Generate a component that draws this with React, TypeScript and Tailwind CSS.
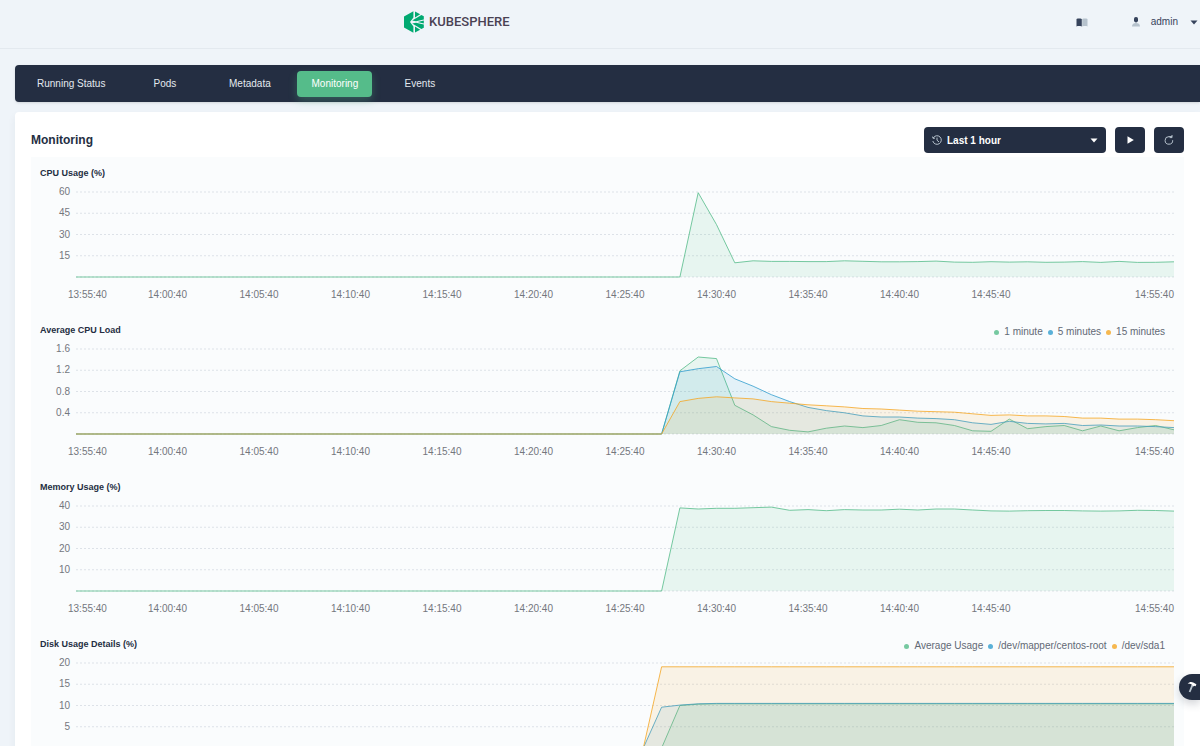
import { Fragment } from "react";

const GREEN = "#55bc8a";
const BLUE = "#329dce";
const ORANGE = "#f5a623";

interface Series {
  name: string;
  color: string;
  // index of the first sample that is not zero
  start: number;
  values: number[];
}

interface ChartProps {
  title: string;
  ticks: number[];
  series: Series[];
  legend?: boolean;
}

const SAMPLES = 61;
const WIDTH = 1098;
const HEIGHT = 85;

const times = [
  "13:55:40",
  "14:00:40",
  "14:05:40",
  "14:10:40",
  "14:15:40",
  "14:20:40",
  "14:25:40",
  "14:30:40",
  "14:35:40",
  "14:40:40",
  "14:45:40",
  "14:55:40",
];

const tabs = ["Running Status", "Pods", "Metadata", "Monitoring", "Events"];

const charts: ChartProps[] = [
  {
    title: "CPU Usage (%)",
    ticks: [60, 45, 30, 15],
    series: [
      {
        name: "CPU",
        color: GREEN,
        start: 34,
        values: [
          59.5, 37, 10, 11.4, 11, 11, 10.9, 10.9, 11.4, 11.1, 10.7, 10.7, 10.9,
          11.2, 10.5, 10.4, 10.8, 10.5, 10.7, 10.4, 10.5, 10.9, 10.3, 11, 10.3,
          10.4, 10.7,
        ],
      },
    ],
  },
  {
    title: "Average CPU Load",
    ticks: [1.6, 1.2, 0.8, 0.4],
    legend: true,
    series: [
      {
        name: "1 minute",
        color: GREEN,
        start: 33,
        values: [
          1.19, 1.45, 1.42, 0.54, 0.36, 0.14, 0.07, 0.04, 0.11, 0.15, 0.12,
          0.16, 0.27, 0.22, 0.21, 0.16, 0.06, 0.05, 0.28, 0.1, 0.14, 0.16,
          0.06, 0.15, 0.06, 0.12, 0.16, 0.08,
        ],
      },
      {
        name: "5 minutes",
        color: BLUE,
        start: 33,
        values: [
          1.17, 1.23, 1.27, 1.04, 0.9, 0.74, 0.61, 0.5, 0.44, 0.4, 0.34, 0.32,
          0.32, 0.3, 0.29, 0.27, 0.21, 0.18, 0.24, 0.2, 0.19, 0.2, 0.16, 0.17,
          0.15, 0.15, 0.14, 0.12,
        ],
      },
      {
        name: "15 minutes",
        color: ORANGE,
        start: 33,
        values: [
          0.61, 0.67, 0.7, 0.68, 0.66, 0.61, 0.58, 0.55, 0.53, 0.51, 0.48, 0.47,
          0.45, 0.43, 0.42, 0.41, 0.38, 0.35, 0.36, 0.34, 0.34, 0.33, 0.3, 0.3,
          0.28, 0.28, 0.27, 0.25,
        ],
      },
    ],
  },
  {
    title: "Memory Usage (%)",
    ticks: [40, 30, 20, 10],
    series: [
      {
        name: "Memory",
        color: GREEN,
        start: 33,
        values: [
          39.1, 38.6, 38.9, 38.9, 39.2, 39.5, 38, 38.3, 37.8, 38.3, 38.1, 38.1,
          38.5, 38.1, 38.6, 38.6, 38.1, 37.7, 37.6, 37.8, 37.9, 37.9, 37.7,
          37.6, 37.7, 38, 37.9, 37.6,
        ],
      },
    ],
  },
  {
    title: "Disk Usage Details (%)",
    ticks: [20, 15, 10, 5],
    legend: true,
    series: [
      {
        name: "Average Usage",
        color: GREEN,
        start: 33,
        values: [10, 10.3, ...Array(26).fill(10.4)],
      },
      {
        name: "/dev/mapper/centos-root",
        color: BLUE,
        start: 32,
        values: [9.6, 10.1, 10.4, ...Array(26).fill(10.5)],
      },
      {
        name: "/dev/sda1",
        color: ORANGE,
        start: 32,
        values: Array(29).fill(19.1),
      },
    ],
  },
];

const toPoints = (series: Series, max: number) =>
  Array.from({ length: SAMPLES }, (_, i) => {
    const value = i < series.start ? 0 : series.values[i - series.start];
    const x = (i * WIDTH) / (SAMPLES - 1);
    const y = HEIGHT - (value / max) * HEIGHT;
    return `${x.toFixed(1)},${y.toFixed(1)}`;
  }).join(" ");

const Chart: React.FC<ChartProps> = ({ title, ticks, series, legend }) => {
  return (
    <section>
      <div className="flex items-center justify-between h-4 pl-[9px] pr-[19px]">
        <h3 className="text-[9px] leading-4 font-bold text-[#242e42]">
          {title}
        </h3>
        {legend && (
          <ul className="flex gap-[5px] mt-1">
            {series.map((s) => (
              <li
                key={s.name}
                className="flex items-center gap-[5px] text-[10px] leading-4 text-[#626975]"
              >
                <span
                  className="size-[5px] rounded-full opacity-80"
                  style={{ backgroundColor: s.color }}
                />
                {s.name}
              </li>
            ))}
          </ul>
        )}
      </div>

      <div className="flex gap-[6px] mt-[3px] pr-[10px]">
        {/* Y axis */}
        <div className="flex flex-col w-[39px] h-[85px] shrink-0 text-right text-[10px] leading-4 text-[#74777d]">
          {ticks.map((tick) => (
            <span key={tick} className="h-1/4">
              {tick}
            </span>
          ))}
        </div>

        <div className="flex-1 min-w-0 pt-2">
          <svg
            viewBox={`0 0 ${WIDTH} ${HEIGHT}`}
            preserveAspectRatio="none"
            className="block w-full h-[85px] overflow-visible"
          >
            {[0, 1, 2, 3, 4].map((i) => (
              <line
                key={i}
                x1={0}
                x2={WIDTH}
                y1={(i * HEIGHT) / 4}
                y2={(i * HEIGHT) / 4}
                stroke="#dde2e8"
                strokeDasharray="2 2"
                vectorEffect="non-scaling-stroke"
              />
            ))}
            {series.map((s) => (
              <Fragment key={s.name}>
                <polygon
                  points={`0,${HEIGHT} ${toPoints(s, ticks[0])} ${WIDTH},${HEIGHT}`}
                  fill={s.color}
                  fillOpacity={0.11}
                />
                <polyline
                  points={toPoints(s, ticks[0])}
                  fill="none"
                  stroke={s.color}
                  strokeOpacity={0.8}
                  vectorEffect="non-scaling-stroke"
                />
              </Fragment>
            ))}
          </svg>

          {/* X axis, half a step per column */}
          <div className="grid grid-cols-24 mt-[10px] text-center text-[10px] leading-4 text-[#74777d]">
            {times.map((time) => (
              <span
                key={time}
                className="col-span-2 first:col-span-1 first:-ml-2 first:text-left last:col-span-3 last:text-right"
              >
                {time}
              </span>
            ))}
          </div>
        </div>
      </div>
    </section>
  );
};

const Logo = () => (
  <a href="#" className="flex items-center gap-[5px]">
    <svg viewBox="0 0 20 22" className="w-5 h-[22px]" fill="#00a971">
      <path d="M0 5.4L9.4.2v6.2L6 11l3.4 4.6v6.2L0 16.6z" />
      <path d="M11 .4l5.2 2.9L11 6.4z" />
      <path d="M11 21.6l5.2-2.9-5.2-3.1z" />
      <path d="M17.4 4l2.4 1.3v3.1L12 10.2 8.2 9.4z" />
      <path d="M17.4 18l2.4-1.3v-3.1L12 11.8l-3.8.8z" />
      <path d="M13.6 11l6.2-1.5v3z" />
    </svg>
    <span className="font-[Roboto,sans-serif] text-[13px] leading-5 font-medium text-[#4a4253]">
      KUBESPHERE
    </span>
  </a>
);

const Caret = ({ className }: { className: string }) => (
  <svg viewBox="0 0 8 5" className={className} fill="currentColor">
    <path d="M.5.5h7L4 4.5z" />
  </svg>
);

const App = () => {
  return (
    <div className="min-h-screen bg-[#eff4f9] font-['Liberation_Sans',Arial,sans-serif] text-[#242e42]">
      <header className="flex items-center h-[49px] pb-1 border-b border-[#e3e9ef]">
        <div className="w-1/3 shrink-0" />
        <div className="flex flex-1 items-center justify-between pl-1 pr-[2px]">
          <Logo />
          <div className="flex items-center">
            <button aria-label="Documentation" className="mr-[44px]">
              <svg viewBox="0 0 12 9" className="w-3 h-[9px]">
                <path d="M.5 1C2 .4 4 .4 5.8 1v7.6C4 8 2 8 .5 8.4z" fill="#36435c" />
                <path d="M6.2 1C8 .4 10 .4 11.5 1v7.4C10 8 8 8 6.2 8.6z" fill="#b6c2cd" />
              </svg>
            </button>
            <button className="flex items-center text-[10px] leading-4 text-[#36435c]">
              <svg viewBox="0 0 8 10" className="w-2 h-[10px] mr-[11px]">
                <path d="M0 9.5C0 7 1.6 6 4 6s4 1 4 3.5z" fill="#b6c2cd" />
                <rect x="2" y="0" width="4" height="5.4" rx="1.8" fill="#36435c" />
              </svg>
              admin
              <Caret className="w-2 h-[5px] ml-3" />
            </button>
          </div>
        </div>
      </header>

      <main className="pl-[15px] pt-4">
        <nav className="flex items-center gap-[10px] h-[37px] px-[10px] rounded-l bg-[#242e42] shadow-sm">
          {tabs.map((tab) => (
            <a
              key={tab}
              href="#"
              className={
                tab === "Monitoring"
                  ? "min-w-[75px] px-3 rounded-sm bg-[#55bc8a] text-center text-[10px] leading-[26px] text-white shadow-[0_4px_8px_0_rgba(85,188,138,0.3)]"
                  : "min-w-[75px] px-3 text-center text-[10px] leading-[26px] text-[#e3e9ef]"
              }
            >
              {tab}
            </a>
          ))}
        </nav>

        <div className="mt-[10px] px-4 pt-[15px] pb-4 rounded-l bg-white shadow-[0_4px_8px_0_rgba(36,46,66,0.06)]">
          <div className="flex items-center justify-between">
            <h2 className="text-[12px] leading-5 font-bold">Monitoring</h2>
            <div className="flex gap-[9px]">
              <div className="relative w-[182px] text-white">
                <svg
                  viewBox="0 0 10 10"
                  className="absolute left-2 top-2 size-[10px]"
                  fill="none"
                  stroke="#b6c2cd"
                >
                  <path d="M1.2 3A4.3 4.3 0 1 1 .8 6M.5 1.6l.6 1.8 1.9-.3M5 2.6v2.6l2 1.8" />
                </svg>
                <select
                  aria-label="Time range"
                  className="block w-full h-[26px] pl-[23px] appearance-none rounded-sm bg-[#242e42] text-[10px] font-bold text-white"
                >
                  <option>Last 1 hour</option>
                </select>
                <Caret className="absolute right-2 top-[11px] w-2 h-[5px]" />
              </div>
              <button
                aria-label="Start"
                className="flex items-center justify-center w-[30px] h-[26px] rounded-sm bg-[#242e42]"
              >
                <svg viewBox="0 0 7 8" className="w-[7px] h-2" fill="#fff">
                  <path d="M.5.3L6.8 4 .5 7.7z" />
                </svg>
              </button>
              <button
                aria-label="Refresh"
                className="flex items-center justify-center w-[30px] h-[26px] rounded-sm bg-[#242e42]"
              >
                <svg
                  viewBox="0 0 10 10"
                  className="size-[10px]"
                  fill="none"
                  stroke="#b6c2cd"
                >
                  <path d="M8.7 5.2A3.8 3.8 0 1 1 5 1.6h3M8 0v2.6H5.6" />
                </svg>
              </button>
            </div>
          </div>

          <div className="flex flex-col gap-[19px] mt-1 pt-2 pb-4 bg-[#fafcfd]">
            {charts.map((chart) => (
              <Chart key={chart.title} {...chart} />
            ))}
          </div>
        </div>
      </main>

      <button
        aria-label="Toolbox"
        className="fixed right-0 top-[674px] flex items-center justify-center w-[21px] h-[26px] pl-1 rounded-l-full bg-[#242e42] shadow-[0_4px_8px_0_rgba(36,46,66,0.2)]"
      >
        <svg viewBox="0 0 10 12" className="w-[10px] h-3">
          <path d="M.6 2.6C2.4.8 4.6.6 6.2 1.6l3.2 1.7-.8 1.9-1.5-.5-.6.8-2-1 .3-.9C3.6 2.9 2.2 2.6.6 2.6z" fill="#fff" />
          <path d="M5.3 4.4L2.6 11" stroke="#b6c2cd" strokeWidth="1.8" />
        </svg>
      </button>
    </div>
  );
};

export default App;
